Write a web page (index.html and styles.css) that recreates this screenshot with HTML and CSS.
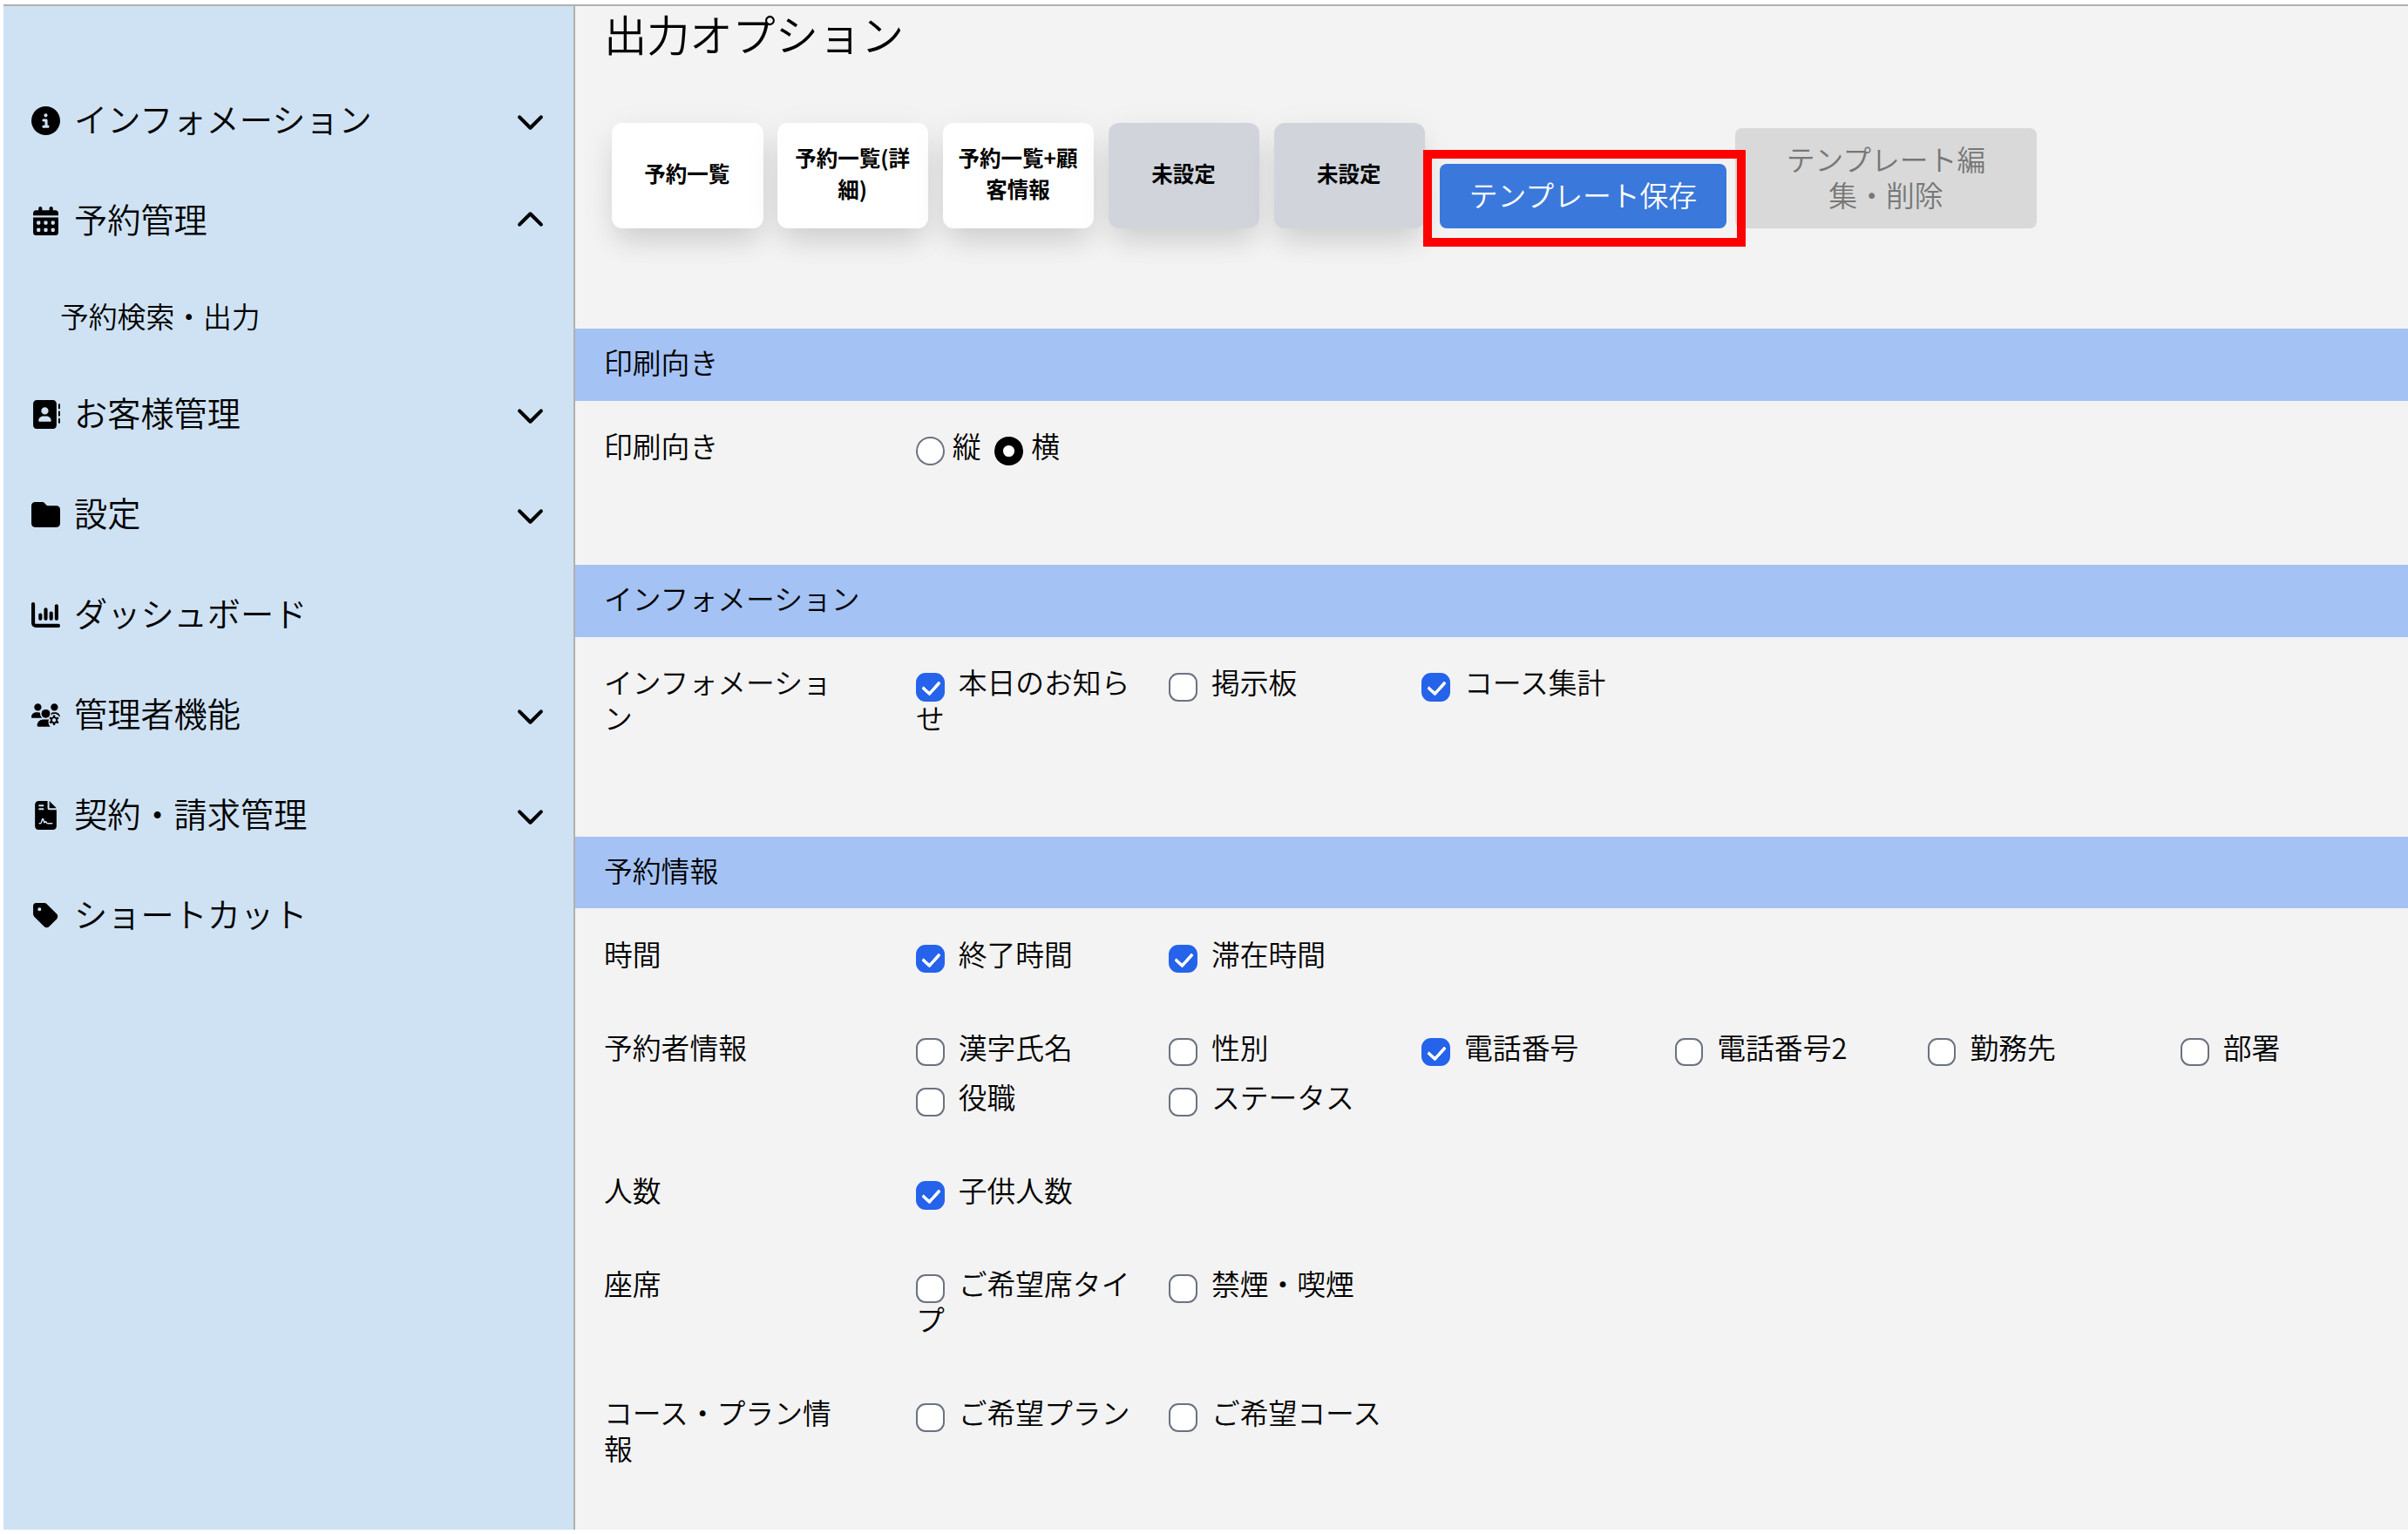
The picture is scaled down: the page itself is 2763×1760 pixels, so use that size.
FILE: index.html
```html
<!DOCTYPE html>
<html lang="ja">
<head>
<meta charset="utf-8">
<title>出力オプション</title>
<link rel="stylesheet" href="styles.css">
</head>
<body>
<svg class="defs" width="0" height="0">
  <symbol id="chev-down" viewBox="0 0 512 512"><path d="M233.4 406.6c12.5 12.5 32.8 12.5 45.3 0l192-192c12.5-12.5 12.5-32.8 0-45.3s-32.8-12.5-45.3 0L256 338.7 86.6 169.4c-12.5-12.5-32.8-12.5-45.3 0s-12.5 32.8 0 45.3l192 192z"/></symbol>
  <symbol id="chev-up" viewBox="0 0 512 512"><path d="M233.4 105.4c12.5-12.5 32.8-12.5 45.3 0l192 192c12.5 12.5 12.5 32.8 0 45.3s-32.8 12.5-45.3 0L256 173.3 86.6 342.6c-12.5 12.5-32.8 12.5-45.3 0s-12.5-32.8 0-45.3l192-192z"/></symbol>
</svg>
<div class="app">
  <nav class="sidebar">
    <a class="item"><svg class="icon" viewBox="0 0 512 512"><path d="M256 512A256 256 0 1 0 256 0a256 256 0 1 0 0 512zM216 336h24V272H216c-13.3 0-24-10.7-24-24s10.7-24 24-24h48c13.3 0 24 10.7 24 24v88h8c13.3 0 24 10.7 24 24s-10.7 24-24 24H216c-13.3 0-24-10.7-24-24s10.7-24 24-24zm40-208a32 32 0 1 1 0 64 32 32 0 1 1 0-64z"/></svg><span class="name">インフォメーション</span><svg class="chev"><use href="#chev-down"/></svg></a>
    <a class="item"><svg class="icon" viewBox="0 0 448 512"><path fill-rule="evenodd" d="M128 0c17.700 0 32 14.300 32 32V64H288V32c0-17.700 14.300-32 32-32s32 14.300 32 32V64h48c26.500 0 48 21.500 48 48v48H0V112C0 85.500 21.500 64 48 64H96V32c0-17.700 14.300-32 32-32zM0 192H448V464c0 26.500-21.500 48-48 48H48c-26.500 0-48-21.500-48-48V192zm64 80v32c0 8.800 7.200 16 16 16h32c8.800 0 16-7.200 16-16V272c0-8.800-7.200-16-16-16H80c-8.800 0-16 7.200-16 16zm128 0v32c0 8.800 7.200 16 16 16h32c8.800 0 16-7.200 16-16V272c0-8.800-7.200-16-16-16H208c-8.800 0-16 7.200-16 16zm144-16c-8.800 0-16 7.200-16 16v32c0 8.800 7.200 16 16 16h32c8.800 0 16-7.200 16-16V272c0-8.800-7.200-16-16-16H336zM64 400v32c0 8.800 7.200 16 16 16h32c8.800 0 16-7.200 16-16V400c0-8.800-7.200-16-16-16H80c-8.800 0-16 7.200-16 16zm144-16c-8.800 0-16 7.200-16 16v32c0 8.800 7.200 16 16 16h32c8.800 0 16-7.200 16-16V400c0-8.800-7.200-16-16-16H208zm112 16v32c0 8.800 7.200 16 16 16h32c8.800 0 16-7.200 16-16V400c0-8.800-7.200-16-16-16H336c-8.800 0-16 7.200-16 16z"/></svg><span class="name">予約管理</span><svg class="chev"><use href="#chev-up"/></svg></a>
    <a class="subitem">予約検索・出力</a>
    <a class="item"><svg class="icon" viewBox="0 0 512 512"><path fill-rule="evenodd" d="M96 0C60.700 0 32 28.700 32 64V448c0 35.300 28.700 64 64 64H384c35.300 0 64-28.700 64-64V64c0-35.300-28.700-64-64-64H96zM208 288h64c44.200 0 80 35.800 80 80c0 8.800-7.200 16-16 16H144c-8.800 0-16-7.200-16-16c0-44.200 35.800-80 80-80zm-32-96a64 64 0 1 1 128 0 64 64 0 1 1 -128 0zM512 80c0-8.800-7.200-16-16-16s-16 7.200-16 16v64c0 8.800 7.200 16 16 16s16-7.200 16-16V80zM496 192c-8.800 0-16 7.200-16 16v64c0 8.800 7.200 16 16 16s16-7.200 16-16V208c0-8.800-7.200-16-16-16zm16 144c0-8.800-7.200-16-16-16s-16 7.200-16 16v64c0 8.800 7.200 16 16 16s16-7.200 16-16V336z"/></svg><span class="name">お客様管理</span><svg class="chev"><use href="#chev-down"/></svg></a>
    <a class="item"><svg class="icon" viewBox="0 0 512 512"><path d="M64 480H448c35.300 0 64-28.700 64-64V160c0-35.300-28.700-64-64-64H288c-10.100 0-19.600-4.700-25.600-12.800L243.200 57.600C231.100 41.500 212.100 32 192 32H64C28.700 32 0 60.700 0 96V416c0 35.300 28.700 64 64 64z"/></svg><span class="name">設定</span><svg class="chev"><use href="#chev-down"/></svg></a>
    <a class="item"><svg class="icon" viewBox="0 0 512 512"><path d="M32 32c17.700 0 32 14.300 32 32V400c0 8.800 7.200 16 16 16H480c17.700 0 32 14.300 32 32s-14.300 32-32 32H80c-44.200 0-80-35.800-80-80V64C0 46.300 14.300 32 32 32zM160 224c17.700 0 32 14.300 32 32v64c0 17.700-14.300 32-32 32s-32-14.300-32-32V256c0-17.700 14.300-32 32-32zm128-64V320c0 17.700-14.300 32-32 32s-32-14.300-32-32V160c0-17.700 14.300-32 32-32s32 14.300 32 32zm64 32c17.700 0 32 14.300 32 32v96c0 17.700-14.300 32-32 32s-32-14.300-32-32V224c0-17.700 14.300-32 32-32zM480 96V320c0 17.700-14.300 32-32 32s-32-14.300-32-32V96c0-17.700 14.300-32 32-32s32 14.300 32 32z"/></svg><span class="name">ダッシュボード</span></a>
    <a class="item"><svg class="icon" viewBox="0 0 640 512"><circle cx="144" cy="80" r="80"/><circle cx="512" cy="80" r="80"/><circle cx="320" cy="224" r="96"/><path d="M0 299C0 240 48 192 107 192h43c16 0 31 3.500 44.600 9.700C190 260 215 296 240 320H21C10 320 0 310 0 299zM436 262c6-18 8-38 9-60 14-6 29-10 45-10h43c59 0 107 48 107 107l-60-55-40-18-60 0zM128 485c0-73 60-133 133-133h118c6 0 12 1 17 2-14 22-22 40-16 62 0 40 14 70 45 96H155c-15 0-27-12-27-27z"/><path fill-rule="evenodd" d="M484 256h42l6 38 22 13 36-14 22 37-30 24v28l30 24-22 37-36-14-22 13-6 38h-42l-6-38-22-13-36 14-22-37 30-24v-28l-30-24 22-37 36 14 22-13zM505 326a42 42 0 1 0 .1 0z"/></svg><span class="name">管理者機能</span><svg class="chev"><use href="#chev-down"/></svg></a>
    <a class="item"><svg class="icon" viewBox="0 0 384 512"><path fill-rule="evenodd" d="M64 0C28.700 0 0 28.700 0 64V448c0 35.300 28.700 64 64 64H320c35.300 0 64-28.700 64-64V160H256c-17.700 0-32-14.300-32-32V0H64zM256 0V128H384L256 0zM80 64h64c8.800 0 16 7.200 16 16s-7.200 16-16 16H80c-8.800 0-16-7.200-16-16s7.200-16 16-16zm0 64h64c8.800 0 16 7.200 16 16s-7.200 16-16 16H80c-8.800 0-16-7.200-16-16s7.200-16 16-16z"/><path class="signature" d="M80 400h10c12 0 19-6 23-18l18-58c4-10 12-10 16 0l20 60c10-18 30-18 38-2 4 12 10 18 22 18h77"/></svg><span class="name">契約・請求管理</span><svg class="chev"><use href="#chev-down"/></svg></a>
    <a class="item"><svg class="icon" viewBox="0 0 448 512"><path fill-rule="evenodd" d="M0 80V229.500c0 17 6.700 33.300 18.700 45.300l176 176c25 25 65.500 25 90.500 0L418.700 317.300c25-25 25-65.500 0-90.500l-176-176c-12-12-28.300-18.700-45.300-18.700H48C21.500 32 0 53.500 0 80zm112 32a32 32 0 1 1 0 64 32 32 0 1 1 0-64z"/></svg><span class="name">ショートカット</span></a>
  </nav>
  <main class="main">
    <h1 class="title">出力オプション</h1>
    <div class="templates">
      <button class="card">予約一覧</button>
      <button class="card">予約一覧(詳細)</button>
      <button class="card">予約一覧+顧客情報</button>
      <button class="card empty">未設定</button>
      <button class="card empty">未設定</button>
      <div class="save-wrap"><button class="btn save">テンプレート保存</button><span class="highlight"></span></div>
      <button class="btn edit">テンプレート編集・削除</button>
    </div>

    <h2 class="band">印刷向き</h2>
    <section class="group">
      <div class="row"><div class="label">印刷向き</div>
        <div class="radios"><label><i class="radio"></i>縦</label><label><i class="radio on"></i>横</label></div>
      </div>
    </section>

    <h2 class="band">インフォメーション</h2>
    <section class="group">
      <div class="row"><div class="label">インフォメーション</div>
        <div class="options">
          <label><i class="box on"></i>本日のお知らせ</label><label><i class="box"></i>掲示板</label><label><i class="box on"></i>コース集計</label>
        </div>
      </div>
    </section>

    <h2 class="band">予約情報</h2>
    <section class="group">
      <div class="row"><div class="label">時間</div>
        <div class="options"><label><i class="box on"></i>終了時間</label><label><i class="box on"></i>滞在時間</label></div>
      </div>
      <div class="row"><div class="label">予約者情報</div>
        <div class="options"><label><i class="box"></i>漢字氏名</label><label><i class="box"></i>性別</label><label><i class="box on"></i>電話番号</label><label><i class="box"></i>電話番号2</label><label><i class="box"></i>勤務先</label><label><i class="box"></i>部署</label><label><i class="box"></i>役職</label><label><i class="box"></i>ステータス</label></div>
      </div>
      <div class="row"><div class="label">人数</div>
        <div class="options"><label><i class="box on"></i>子供人数</label></div>
      </div>
      <div class="row"><div class="label">座席</div>
        <div class="options"><label><i class="box"></i>ご希望席タイプ</label><label><i class="box"></i>禁煙・喫煙</label></div>
      </div>
      <div class="row"><div class="label">コース・プラン情報</div>
        <div class="options"><label><i class="box"></i>ご希望プラン</label><label><i class="box"></i>ご希望コース</label></div>
      </div>
    </section>
  </main>
</div>
</body>
</html>
```

FILE: styles.css
```css
* { box-sizing: border-box; }
body {
  margin: 0;
  height: 1760px;
  padding: 5px 0 5px 4px;
  overflow: hidden;
  background: #fff;
  color: #000;
  font-family: "Noto Sans CJK JP", sans-serif;
  font-weight: 350;
  font-size: 32.8px;
  line-height: 40.85px;
}
.defs { position: absolute; }
button { border: 0; margin: 0; font: inherit; color: inherit; }
.app {
  display: flex;
  height: 1750px;
  border-top: 2px solid #b0b0b0;
}

.sidebar {
  flex: none;
  width: 656px;
  padding: 74px 33px 0 32px;
  background: #cfe2f3;
  border-right: 2px solid #b0b0b0;
}
.item {
  display: flex;
  align-items: center;
  height: 115px;
  font-size: 38.200px;
}
.icon { flex: none; width: 33px; height: 33px; }
.signature {
  fill: none;
  stroke: #cfe2f3;
  stroke-width: 24;
  stroke-linecap: round;
  stroke-linejoin: round;
}
.name { flex: 1; margin-left: 16px; padding-bottom: 4px; }
.chev { width: 33px; height: 33px; }
.subitem {
  display: flex;
  align-items: center;
  height: 106.500px;
  padding: 0 0 4px 33px;
}

.main {
  flex: 1;
  min-width: 0;
  background: #f3f3f3;
}
.title {
  margin: 0;
  padding-left: 33px;
  height: 134px;
  font-size: 49.200px;
  font-weight: inherit;
  line-height: 62px;
}
.templates {
  display: flex;
  align-items: flex-end;
  height: 121px;
  margin: 0 0 115px 42px;
}
.card {
  width: 173.500px;
  height: 121px;
  margin-right: 16.400px;
  padding: 0 15px 5px 14px;
  border-radius: 12px;
  background: #fff;
  box-shadow: 0 20px 31px -6px rgba(0, 0, 0, .1), 0 10px 40px rgba(0, 0, 0, .07);
  font-size: 24.500px;
  font-weight: 700;
  line-height: 36px;
}
.card.empty { background: #d1d5db; }
.btn { padding: 0 30px 3px; border-radius: 8px; }
.save-wrap { position: relative; width: 329px; height: 74px; margin-left: .5px; }
.save {
  width: 100%;
  height: 100%;
  background: #3b78db;
  color: #fff;
}
.highlight {
  position: absolute;
  inset: -16px -22px -21px -19px;
  border: 10px solid #f00;
}
.edit {
  width: 346px;
  height: 115px;
  margin-left: 10px;
  padding: 0 48px 3px;
  background: #d9d9d9;
  color: #777;
}

.band {
  margin: 0;
  height: 82.500px;
  padding-left: 33px;
  background: #a4c2f4;
  font-size: inherit;
  font-weight: inherit;
  line-height: 76px;
}
.group { padding: 31.500px 0 50px 33px; }
.row {
  display: grid;
  grid-template-columns: 270px 1fr;
  column-gap: 88px;
  margin-bottom: 66.200px;
}
.radios { display: flex; }
.radios label { margin-right: 16px; }
.options {
  display: grid;
  grid-template-columns: repeat(6, 260px);
  gap: 16.500px 30.200px;
}
.box, .radio {
  display: inline-block;
  width: 32.700px;
  height: 32.700px;
  margin: -4px 16px -4px 0;
  border: 2.500px solid #6b7280;
  border-radius: 11px;
  background: #fff;
  vertical-align: -4.500px;
}
.radio { margin-right: 9px; border-radius: 50%; }
.radio.on { border: 10px solid #000; }
.box.on {
  border-color: #2563eb;
  background: #2563eb;
}
.box.on::after {
  content: "";
  display: block;
  width: 9px;
  height: 16px;
  margin: 3px 0 0 9px;
  border: solid #fff;
  border-width: 0 4px 4px 0;
  border-radius: 2px;
  transform: rotate(42deg);
}
```
